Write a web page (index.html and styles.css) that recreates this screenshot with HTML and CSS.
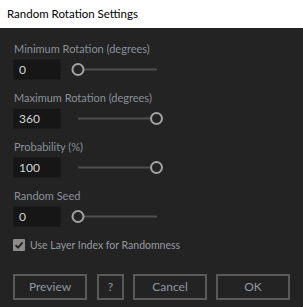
FILE: index.html
```html
<!DOCTYPE html>
<html lang="en">
<head>
	<meta charset="UTF-8">
	<title>Random Rotation Settings</title>
	<link rel="stylesheet" href="styles.css">
</head>
<body>
	<div id="titlebar">Random Rotation Settings</div>
	<div id="panel">
		<div class="field">
			<div class="label">Minimum Rotation (degrees)</div>
			<div class="row">
				<div class="num">0</div>
				<svg class="slider" width="93" height="15" viewBox="0 0 93 15">
					<line x1="7" y1="7.5" x2="86" y2="7.5" />
					<circle cx="7" cy="7.5" r="5.5" />
				</svg>
			</div>
		</div>
		<div class="field">
			<div class="label">Maximum Rotation (degrees)</div>
			<div class="row">
				<div class="num">360</div>
				<svg class="slider" width="93" height="15" viewBox="0 0 93 15">
					<line x1="7" y1="7.5" x2="86" y2="7.5" />
					<circle cx="85.5" cy="7.5" r="5.5" />
				</svg>
			</div>
		</div>
		<div class="field">
			<div class="label">Probability (%)</div>
			<div class="row">
				<div class="num">100</div>
				<svg class="slider" width="93" height="15" viewBox="0 0 93 15">
					<line x1="7" y1="7.5" x2="86" y2="7.5" />
					<circle cx="85.5" cy="7.5" r="5.5" />
				</svg>
			</div>
		</div>
		<div class="field">
			<div class="label">Random Seed</div>
			<div class="row">
				<div class="num">0</div>
				<svg class="slider" width="93" height="15" viewBox="0 0 93 15">
					<line x1="7" y1="7.5" x2="86" y2="7.5" />
					<circle cx="7" cy="7.5" r="5.5" />
				</svg>
			</div>
		</div>
		<div id="check">
			<span class="box">
				<svg width="12" height="12" viewBox="0 0 12 12">
					<path d="M2.5 6.2 L5 8.6 L9.6 3.4" />
				</svg>
			</span>
			<span>Use Layer Index for Randomness</span>
		</div>
		<div id="buttons">
			<div class="btn wide first">Preview</div>
			<div class="btn small">?</div>
			<div class="btn wide">Cancel</div>
			<div class="btn wide">OK</div>
		</div>
	</div>
</body>
</html>
```

FILE: styles.css
```css
*{
	margin: 0;
	padding: 0;
	box-sizing: border-box;
}
body{
	width: 303px;
	height: 307px;
	background: #232323;
	font-family: Lato, "Liberation Sans", sans-serif;
	overflow: hidden;
}
#titlebar{
	height: 28px;
	background: #fff;
	color: #000;
	font-size: 11.5px;
	line-height: 28px;
	padding-left: 7px;
}
#panel{
	padding: 14px 0 0 13px;
}
.field{
	margin-bottom: 11px;
}
.label{
	color: #8a9099;
	font-size: 11px;
	line-height: 14px;
	height: 14px;
	padding-left: 1px;
	margin-bottom: 3px;
}
.row{
	display: flex;
	align-items: center;
	height: 21px;
}
.num{
	width: 48px;
	height: 21px;
	background: #161616;
	border: 1px solid #1c1c1c;
	color: #d2d6dc;
	font-size: 12px;
	line-height: 19px;
	padding-left: 5px;
}
.slider{
	margin-left: 10px;
	display: block;
}
.slider line{
	stroke: #4e4e4e;
	stroke-width: 2;
}
.slider circle{
	fill: #232323;
	stroke: #a3a3a3;
	stroke-width: 2;
}
#check{
	display: flex;
	align-items: center;
	height: 14px;
	color: #959aa1;
	font-size: 10.5px;
}
#check .box{
	width: 12px;
	height: 12px;
	background: #8c8c8c;
	border-radius: 1px;
	margin-right: 5px;
}
#check svg{
	display: block;
}
#check path{
	fill: none;
	stroke: #222;
	stroke-width: 1.8;
}
#buttons{
	display: flex;
	gap: 9px;
	margin-top: 22px;
}
.btn{
	height: 26px;
	border: 2px solid #5a5a5a;
	color: #8e99a6;
	font-size: 12px;
	line-height: 22px;
	text-align: center;
}
.wide{
	width: 74px;
}
.small{
	width: 27px;
}
.first{
	margin-right: 1px;
}
```
